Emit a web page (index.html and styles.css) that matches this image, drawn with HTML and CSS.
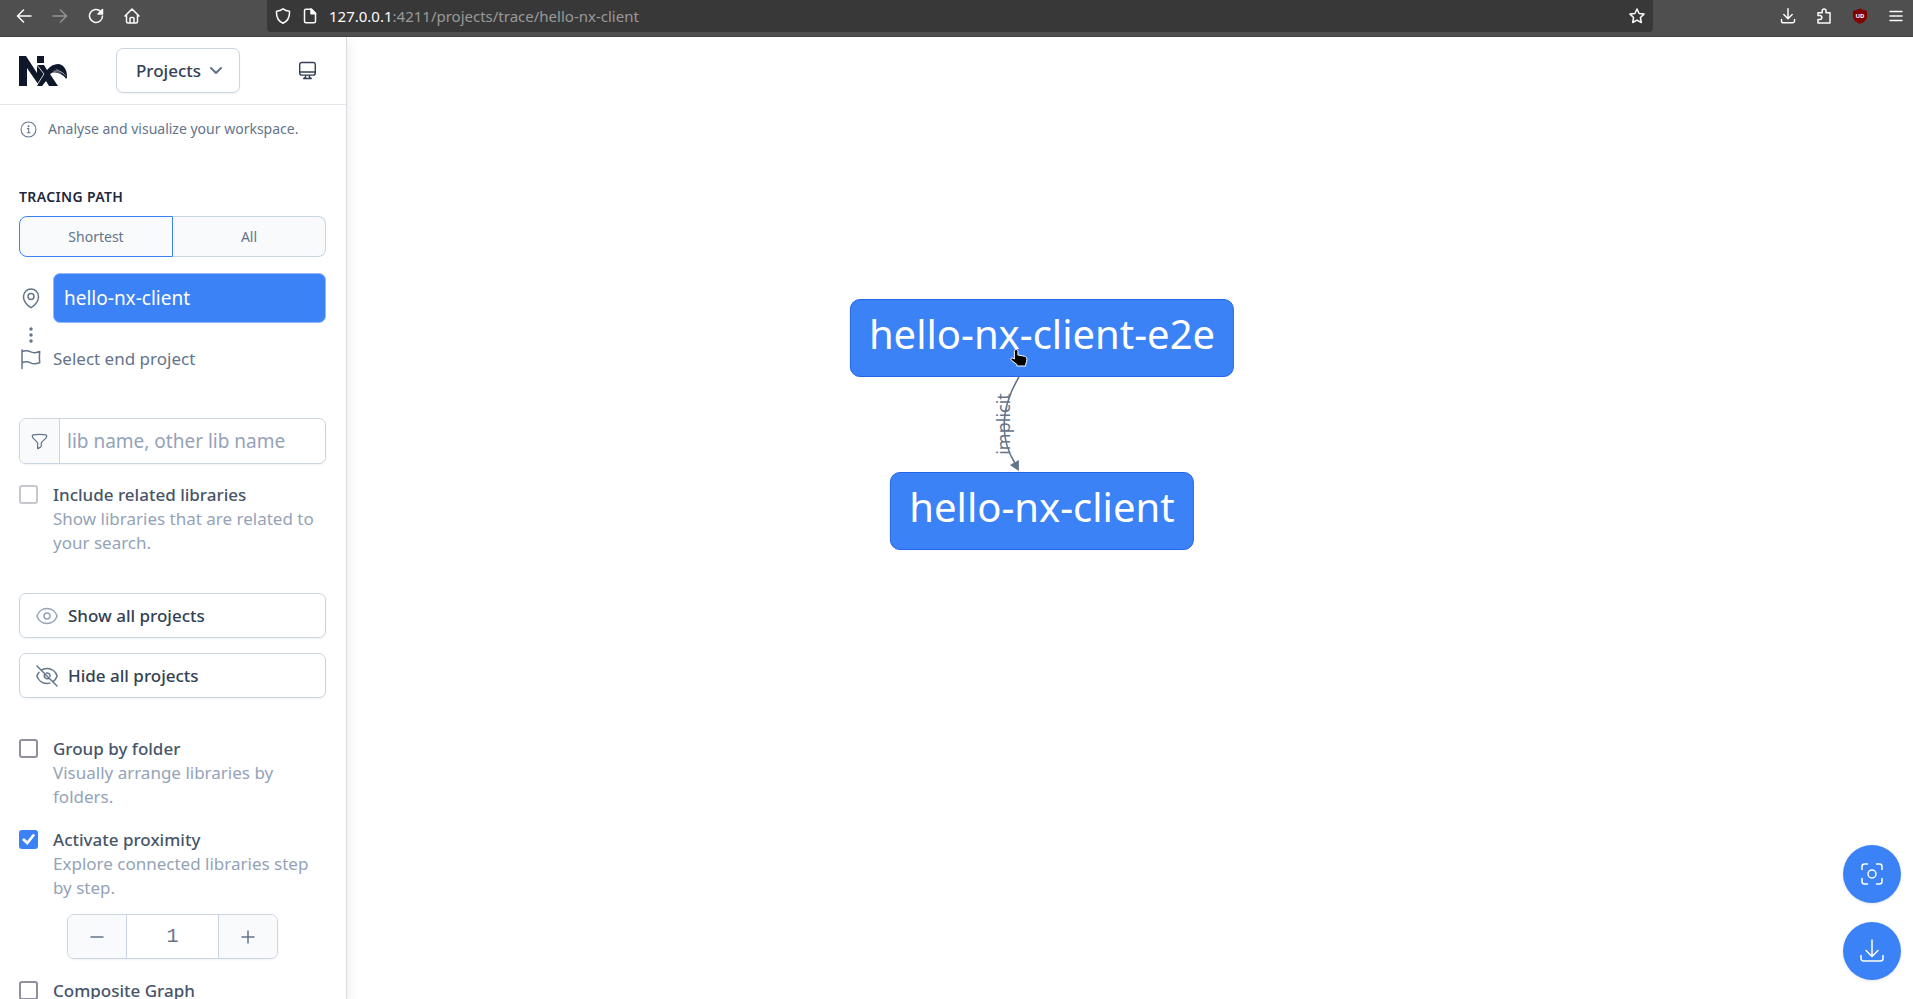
FILE: index.html
```html
<!DOCTYPE html>
<html lang="en">
<head>
    <meta charset="UTF-8">
    <meta name="viewport" content="width=device-width, initial-scale=1.0">
    <title>Nx Graph</title>
    <link rel="stylesheet" href="styles.css">
</head>
<body>

    <!-- browser toolbar -->
    <div class="toolbar">
        <div class="nav">
            <button aria-label="Back"><svg viewBox="0 0 16 16"><path d="M15 8H1.5M7.5 2L1.5 8l6 6"/></svg></button>
            <button aria-label="Forward" class="dim"><svg viewBox="0 0 16 16"><path d="M1 8h13.500M8.500 2l6 6-6 6"/></svg></button>
            <button aria-label="Reload"><svg viewBox="0 0 16 16"><path d="M12.500 3.200A6.500 6.500 0 1 0 14.500 8"/><path class="solid" d="M14.500 1.500V6H10z"/></svg></button>
            <button aria-label="Home"><svg viewBox="0 0 16 16"><path d="M1 8l7-7 7 7M2.500 7v6.500a1.500 1.500 0 0 0 1.500 1.500h8a1.500 1.500 0 0 0 1.500-1.500V7M6 15v-4.500a1 1 0 0 1 1-1h2a1 1 0 0 1 1 1V15"/></svg></button>
        </div>
        <div class="url">
            <svg viewBox="0 0 16 16"><path d="M8 .8c2 1.500 4.200 2.200 6.500 2.400.3 5.300-1.500 9.800-6.500 12C3 13 1.200 8.500 1.500 3.200 3.800 3 6 2.300 8 .8z"/></svg>
            <svg viewBox="0 0 16 16"><path d="M9.500 1.200H4a1.500 1.500 0 0 0-1.500 1.500v10.600A1.500 1.500 0 0 0 4 14.800h8a1.500 1.500 0 0 0 1.500-1.500V5.200z"/><path class="solid" d="M9 1v4.700h4.700z"/></svg>
            <span class="address"><b>127.0.0.1</b>:4211/projects/trace/hello-nx-client</span>
            <svg viewBox="0 0 16 16"><path d="M8 1l2.100 4.500 4.900.6-3.600 3.400.9 5L8 12.100l-4.300 2.400.9-5L1 6.100l4.900-.6z"/></svg>
        </div>
        <div class="tools">
            <button aria-label="Downloads"><svg viewBox="0 0 16 16"><path d="M8 .8v9.700M3.800 6.500L8 10.700l4.200-4.200M1.500 11.500V13a1.800 1.800 0 0 0 1.800 1.800h9.400a1.800 1.800 0 0 0 1.800-1.800v-1.500"/></svg></button>
            <button aria-label="Extensions"><svg viewBox="0 0 16 16"><path d="M2 7.500V4.800h4.200V3a1.900 1.900 0 0 1 3.800 0v1.800h4V15H2v-3.500h1.800a2 2 0 0 0 0-4z"/></svg></button>
            <button aria-label="Blocker"><svg viewBox="0 0 16 16"><path class="shield" d="M8 .5c2.200 1.300 4.500 2 7 2.200v5.500c0 3.500-3 6-7 7.600-4-1.600-7-4.100-7-7.600V2.700C3.500 2.500 5.800 1.800 8 .5z"/><text x="8" y="10">UD</text></svg></button>
            <button aria-label="Menu"><svg viewBox="0 0 16 16"><path d="M2 3.500h12M2 8h12M2 12.500h12"/></svg></button>
        </div>
    </div>

    <div class="app">
        <aside class="sidebar">
            <header>
                <svg class="logo" viewBox="0 0 48 30" role="img" aria-label="Nx">
                    <path d="M0 0h7l11 17V9h7l3 5c3-4 7-6 11-6 5 0 9 5 9 12 0 1 0 2-1 3-1-2-2-3-4-4-3-2-6-3-10-2l-2 1 8 12h-9l-3-5-4 5h-5l1-2-11-16v18H0z"/>
                    <path d="M18 0h7v7h-7z"/>
                    <path class="cut" d="M18 8.500h7M18 9l7 9-7 11"/>
                    <path class="feather" d="M33 17c2-2 6-2 9 1M35 15c4-1 8 0 12 5M37 13l8 5"/>
                </svg>
                <button class="box picker">Projects
                    <svg viewBox="0 0 12 8"><path d="M1 1l5 5 5-5"/></svg>
                </button>
                <button class="theme" aria-label="Theme"><svg viewBox="0 0 20 20"><path d="M4 1.500h12A2.200 2.200 0 0 1 18.200 3.700v9A2.200 2.200 0 0 1 16 14.900H4a2.200 2.200 0 0 1-2.200-2.200v-9A2.200 2.200 0 0 1 4 1.500zM2 11.500h16M8 15v2l-2 1.500h8L12 17v-2"/></svg></button>
            </header>

            <p class="info">
                <svg viewBox="0 0 16 16"><circle cx="8" cy="8" r="7"/><path d="M7 7.200h1.200V11M6.800 11h2.700"/><circle class="solid" cx="8" cy="5" r=".4"/></svg>
                Analyse and visualize your workspace.
            </p>

            <section class="trace">
                <h2>Tracing path</h2>
                <div class="toggle">
                    <button class="on">Shortest</button>
                    <button>All</button>
                </div>
                <div class="step">
                    <svg viewBox="0 0 24 24"><path d="M15 10.500a3 3 0 1 1-6 0 3 3 0 0 1 6 0z"/><path d="M19.500 10.500c0 7.100-7.500 11.200-7.500 11.200s-7.500-4.100-7.500-11.200a7.500 7.500 0 0 1 15 0z"/></svg>
                    <span class="start">hello-nx-client</span>
                </div>
                <div class="step dots">
                    <svg viewBox="0 0 24 16"><circle class="solid" cx="12" cy="2" r="1"/><circle class="solid" cx="12" cy="8" r="1"/><circle class="solid" cx="12" cy="14" r="1"/></svg>
                </div>
                <div class="step end">
                    <svg viewBox="0 0 24 24"><path d="M3 3v18.500M3 4.500l2-.5a9 9 0 0 1 6.200.7 9 9 0 0 0 6 .7l3.500-.8a48 48 0 0 0 0 11.200l-3.200.7a9 9 0 0 1-6-.7 9 9 0 0 0-6.200-.7L3 15.700"/></svg>
                    <span>Select end project</span>
                </div>
            </section>

            <label class="box search">
                <span class="filter"><svg viewBox="0 0 24 24"><path d="M12 3c2.800 0 5.500.2 8.100.7.500.1.900.5.900 1.100v1a2.200 2.200 0 0 1-.7 1.600l-5.400 5.400a2.200 2.200 0 0 0-.7 1.600v3a2.200 2.200 0 0 1-1.200 2L9.700 21v-6.600A2.200 2.200 0 0 0 9 12.800L3.700 7.400A2.200 2.200 0 0 1 3 5.800v-1c0-.6.400-1 .9-1.100A48 48 0 0 1 12 3z"/></svg></span>
                <input type="text" placeholder="lib name, other lib name">
            </label>

            <div class="option">
                <input type="checkbox" id="related" disabled>
                <label for="related">Include related libraries</label>
                <p>Show libraries that are related to your search.</p>
            </div>

            <div class="actions">
                <button class="box"><svg class="pale" viewBox="0 0 24 24"><path d="M2 12.300a1 1 0 0 1 0-.6C3.400 7.500 7.400 4.500 12 4.500s8.600 3 10 7.200a1 1 0 0 1 0 .6c-1.400 4.200-5.400 7.200-10 7.200s-8.600-3-10-7.200z"/><circle cx="12" cy="12" r="3"/></svg>Show all projects</button>
                <button class="box"><svg viewBox="0 0 24 24"><path d="M4 8.200A10.500 10.500 0 0 0 1.900 12c1.300 4.300 5.300 7.500 10.100 7.500 1 0 2-.1 2.900-.4M6.200 6.200A10.500 10.500 0 0 1 12 4.500c4.800 0 8.800 3.200 10.100 7.500a10.500 10.500 0 0 1-4.300 5.800M2 2l20 20M9.900 9.900a3 3 0 0 0 4.200 4.200M11.500 9a3 3 0 0 1 3.500 3.500"/></svg>Hide all projects</button>
            </div>

            <div class="option">
                <input type="checkbox" id="group">
                <label for="group">Group by folder</label>
                <p>Visually arrange libraries by folders.</p>
            </div>
            <div class="option">
                <input type="checkbox" id="proximity" checked>
                <label for="proximity">Activate proximity</label>
                <p>Explore connected libraries step by step.</p>
            </div>
            <div class="box stepper">
                <button aria-label="Less"><svg viewBox="0 0 14 14"><path d="M1 7h12"/></svg></button>
                <output>1</output>
                <button aria-label="More"><svg viewBox="0 0 14 14"><path d="M1 7h12M7 1v12"/></svg></button>
            </div>
            <div class="option">
                <input type="checkbox" id="composite">
                <label for="composite">Composite Graph</label>
            </div>
        </aside>

        <main>
            <div class="graph">
                <div class="node">hello-nx-client-e2e</div>
                <svg class="edge" viewBox="0 0 60 95">
                    <path d="M39 0Q11 48 36 88"/>
                    <path class="arrow" d="M39 94l-9-6 9-5z"/>
                    <text transform="translate(30 47) rotate(-90)">implicit</text>
                </svg>
                <div class="node">hello-nx-client</div>
                <!-- hand pointer -->
                <svg class="pointer" viewBox="0 0 18 20"><path d="M6 1.500c1.300 0 2 .8 2 2V7l6.500 1.200c1.500.4 2.500 1.300 2.500 3 0 2-.4 3.300-1.200 5V18H7v-1.500L1.200 12c-.8-1 .3-2.400 1.600-1.900L4.500 11V3.500c0-1.200.5-2 1.500-2z"/></svg>
            </div>

            <div class="fabs">
                <button aria-label="Focus"><svg viewBox="0 0 24 24"><path d="M7.500 2H4.500A2.500 2.500 0 0 0 2 4.500v3M16.500 2h3A2.500 2.500 0 0 1 22 4.500v3M22 16.500v3a2.500 2.500 0 0 1-2.500 2.500h-3M7.500 22h-3A2.500 2.500 0 0 1 2 19.500v-3"/><circle cx="12" cy="12" r="4"/></svg></button>
                <button aria-label="Save as image"><svg viewBox="0 0 24 24"><path d="M12 1v16M6 11.500l6 6 6-6M1 16.500v3A2.500 2.500 0 0 0 3.500 22h17a2.500 2.500 0 0 0 2.500-2.500v-3"/></svg></button>
            </div>
        </main>
    </div>

</body>
</html>
```

FILE: styles.css
```css
:root {
    --blue: #3b82f6;
    --line: #cbd5e1;
    --text: #334155;
    --muted: #64748b;
    --pale: #94a3b8;
    --soft: #f8fafc;
}

* {
    box-sizing: border-box;
}

body {
    display: flex;
    flex-direction: column;
    height: 100vh;
    margin: 0;
    overflow: hidden;
    font-family: "Noto Sans", sans-serif;
    font-size: 17px;
    line-height: 24px;
    color: var(--muted);
    background: #fff;
}

button {
    padding: 0;
    border: 0;
    background: none;
    font: inherit;
    color: inherit;
}

p, h2 {
    margin: 0;
}

svg {
    flex: none;
    fill: none;
    stroke: currentColor;
    stroke-width: 1.5;
    stroke-linecap: round;
    stroke-linejoin: round;
}

.solid {
    fill: currentColor;
}

/* browser toolbar */
.toolbar {
    display: flex;
    flex: none;
    height: 37px;
    padding-bottom: 4px;
    background: #4f4f4f;
    border-bottom: 1px solid #424242;
    color: #fbfbfe;
}

.toolbar svg {
    display: block;
    width: 16px;
    height: 16px;
}

.nav {
    display: flex;
    align-items: center;
    gap: 20px;
    width: 267px;
    padding-left: 16px;
}

.dim {
    opacity: 0.4;
}

.url {
    display: flex;
    flex: 1;
    align-items: center;
    gap: 11px;
    padding: 0 8px;
    background: #383838;
    border-radius: 0 0 4px 4px;
}

.address {
    flex: 1;
    font-size: 15px;
    color: #9a9a9a;
}

.address b {
    font-weight: 400;
    color: #fbfbfe;
}

.tools {
    display: flex;
    align-items: center;
    justify-content: flex-end;
    gap: 20px;
    width: 260px;
    padding-right: 9px;
}

.shield {
    fill: #800000;
    stroke: none;
}

.tools text {
    font-size: 6px;
    font-weight: 700;
    text-anchor: middle;
    fill: #fff;
    stroke: none;
}

/* sidebar */
.app {
    display: flex;
    flex: 1;
    min-height: 0;
}

.sidebar {
    flex: none;
    width: 347px;
    overflow: hidden;
    border-right: 1px solid #d9dce1;
    box-shadow: 0 4px 12px #0000001a;
}

.sidebar header {
    display: flex;
    align-items: center;
    height: 68px;
    padding: 0 29px 0 19px;
    border-bottom: 1px solid #e2e5e9;
}

.logo {
    width: 48px;
    height: 30px;
    fill: #0f172a;
    stroke: none;
}

.logo .cut,
.logo .feather {
    fill: none;
    stroke: #fff;
    stroke-width: 0.8;
}

.logo .feather {
    stroke-width: 0.4;
}

.box {
    border: 1px solid var(--line);
    border-radius: 7px;
    background: #fff;
    box-shadow: 0 1px 2px #0000000d;
}

.picker {
    display: flex;
    align-items: center;
    justify-content: space-between;
    width: 124px;
    height: 45px;
    margin-left: 49px;
    padding: 0 17px 0 19px;
    font-weight: 500;
    color: var(--text);
}

.picker svg {
    width: 12px;
    height: 8px;
    stroke-width: 2;
    color: var(--muted);
}

.theme {
    margin-left: auto;
}

.theme svg {
    display: block;
    width: 19px;
    height: 19px;
    color: var(--text);
}

.info {
    display: flex;
    align-items: center;
    gap: 11px;
    padding: 12px 20px 0;
    font-size: 14px;
}

.info svg {
    width: 17px;
    height: 17px;
    stroke-width: 1;
}

.trace {
    padding: 44px 20px 0 19px;
}

.trace h2 {
    font-size: 14px;
    font-weight: 600;
    line-height: 24px;
    letter-spacing: 0.025em;
    text-transform: uppercase;
    color: #1e293b;
}

.toggle {
    display: flex;
    height: 41px;
    margin: 7px 0 16px;
    font-size: 14px;
}

.toggle button {
    flex: 1;
    border: 1px solid var(--line);
    border-left: 0;
    border-radius: 0 8px 8px 0;
    background: var(--soft);
}

.toggle .on {
    border: 1px solid var(--blue);
    border-radius: 8px 0 0 8px;
}

.step {
    display: flex;
    align-items: center;
    gap: 10px;
}

.step svg {
    width: 24px;
    height: 24px;
}

.start {
    flex: 1;
    height: 50px;
    padding: 0 10px;
    border: 1px solid #93b9f9;
    border-radius: 7px;
    background: var(--blue);
    font-size: 19px;
    line-height: 48px;
    color: #fff;
}

.step.dots svg {
    height: 16px;
    margin: 4px 0;
}

.search {
    display: flex;
    height: 46px;
    margin: 47px 20px 19px 19px;
    overflow: hidden;
}

.filter {
    display: flex;
    align-items: center;
    justify-content: center;
    width: 40px;
    background: var(--soft);
    border-right: 1px solid var(--line);
}

.filter svg {
    width: 19px;
    height: 19px;
}

.search input {
    flex: 1;
    min-width: 0;
    padding: 0 7px;
    border: 0;
    background: none;
    font: inherit;
    font-size: 19px;
}

.search input::placeholder {
    color: var(--pale);
}

.option {
    display: grid;
    grid-template-columns: 19px 1fr;
    column-gap: 15px;
    padding: 0 19px;
    margin-bottom: 19px;
}

.option input {
    appearance: none;
    width: 19px;
    height: 19px;
    margin: 2px 0 0;
    border: 2px solid #8f8f9d;
    border-radius: 3px;
    background: #fff;
}

.option input:disabled {
    border-color: #c7c7ce;
}

.option input:checked {
    position: relative;
    border-color: var(--blue);
    background: var(--blue);
}

/* tick */
.option input:checked::after {
    content: "";
    position: absolute;
    inset: -2px;
    background: #fff;
    clip-path: polygon(16% 53%, 26% 42%, 43% 58%, 74% 20%, 85% 27%, 44% 79%);
}

.option label {
    font-weight: 500;
    color: #475569;
}

.option p {
    grid-column: 2;
    color: var(--pale);
}

.actions {
    display: flex;
    flex-direction: column;
    gap: 15px;
    padding: 19px 20px 39px 19px;
}

.actions button {
    display: flex;
    align-items: center;
    gap: 9px;
    height: 45px;
    padding: 0 15px;
    font-weight: 500;
    color: var(--text);
}

.actions svg {
    width: 24px;
    height: 24px;
    color: var(--muted);
}

.actions .pale {
    color: var(--pale);
}

.stepper {
    display: flex;
    width: 211px;
    height: 45px;
    margin: -5px auto 20px 67px;
    overflow: hidden;
}

.stepper button {
    display: flex;
    align-items: center;
    justify-content: center;
    width: 58px;
    background: var(--soft);
}

.stepper svg {
    width: 14px;
    height: 14px;
}

.stepper output {
    flex: 1;
    border: solid var(--line);
    border-width: 0 1px;
    font-family: "Liberation Mono", monospace;
    font-size: 20px;
    line-height: 43px;
    text-align: center;
}

/* graph canvas */
main {
    position: relative;
    flex: 1;
}

.graph {
    position: absolute;
    top: 262px;
    left: calc(50% - 88px);
    transform: translateX(-50%);
    display: flex;
    flex-direction: column;
    align-items: center;
}

.node {
    height: 78px;
    padding: 0 18px;
    border: 1px solid #2563eb;
    border-radius: 10px;
    background: var(--blue);
    font-size: 40px;
    line-height: 68px;
    white-space: nowrap;
    color: #fff;
}

.edge {
    width: 60px;
    height: 95px;
    margin-right: 64px;
    overflow: visible;
}

.edge .arrow {
    fill: var(--muted);
    stroke: none;
}

.edge text {
    font-size: 18px;
    text-anchor: middle;
    fill: var(--muted);
    stroke: none;
}

.pointer {
    position: absolute;
    top: 49px;
    left: 160px;
    width: 18px;
    height: 20px;
    fill: #000;
    stroke: #fff;
    stroke-width: 1;
}

.fabs {
    position: absolute;
    right: 12px;
    bottom: 19px;
    display: flex;
    flex-direction: column;
    gap: 19px;
}

.fabs button {
    display: flex;
    align-items: center;
    justify-content: center;
    width: 58px;
    height: 58px;
    border-radius: 50%;
    background: var(--blue);
    box-shadow: 0 1px 3px #0000001a;
    color: #fff;
}

.fabs svg {
    width: 24px;
    height: 24px;
}
```
